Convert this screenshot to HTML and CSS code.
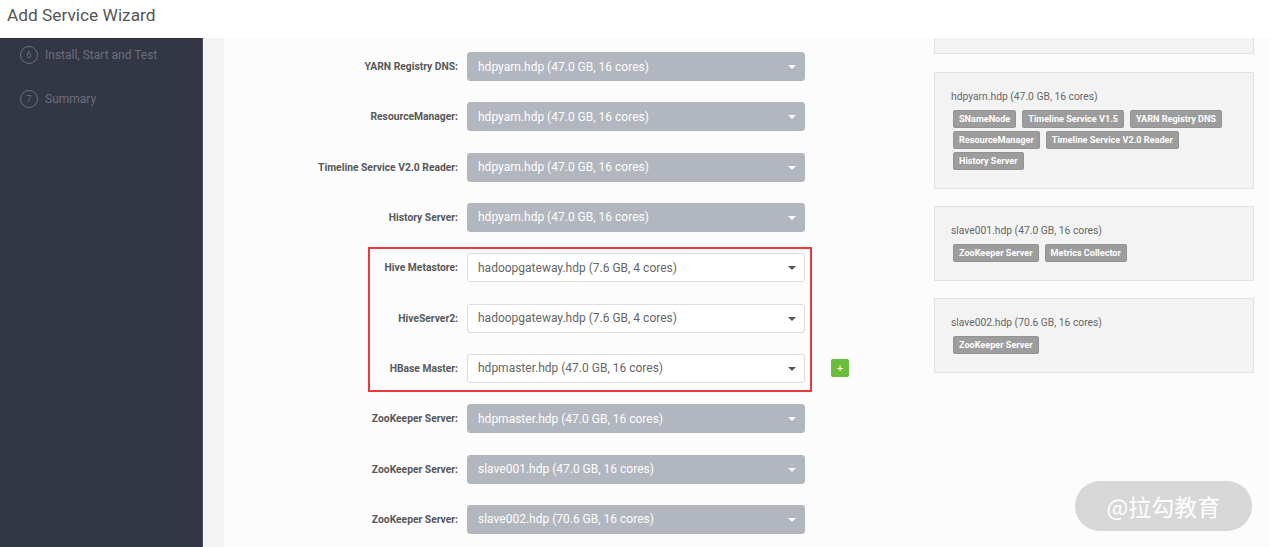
FILE: index.html
```html
<!DOCTYPE html>
<html>
<head>
<meta charset="utf-8">
<link rel="stylesheet" href="styles.css">
</head>
<body>
<header class="topbar"><h1 class="title">Add Service Wizard</h1></header>
<div class="layout">
  <nav class="sidebar">
    <div class="step"><span class="step-num">6</span><span class="step-name">Install, Start and Test</span></div>
    <div class="step"><span class="step-num">7</span><span class="step-name">Summary</span></div>
  </nav>
  <div class="strip"></div>
  <main class="main">
    <section class="form">
      <div class="row"><label class="lbl">YARN Registry DNS:</label><div class="sel disabled">hdpyarn.hdp (47.0 GB, 16 cores)<span class="caret"></span></div></div>
      <div class="row"><label class="lbl">ResourceManager:</label><div class="sel disabled">hdpyarn.hdp (47.0 GB, 16 cores)<span class="caret"></span></div></div>
      <div class="row"><label class="lbl">Timeline Service V2.0 Reader:</label><div class="sel disabled">hdpyarn.hdp (47.0 GB, 16 cores)<span class="caret"></span></div></div>
      <div class="row"><label class="lbl">History Server:</label><div class="sel disabled">hdpyarn.hdp (47.0 GB, 16 cores)<span class="caret"></span></div></div>
      <div class="highlight">
        <div class="row"><label class="lbl">Hive Metastore:</label><div class="sel">hadoopgateway.hdp (7.6 GB, 4 cores)<span class="caret"></span></div></div>
        <div class="row"><label class="lbl">HiveServer2:</label><div class="sel">hadoopgateway.hdp (7.6 GB, 4 cores)<span class="caret"></span></div></div>
        <div class="row"><label class="lbl">HBase Master:</label><div class="sel">hdpmaster.hdp (47.0 GB, 16 cores)<span class="caret"></span></div><button class="add">+</button></div>
      </div>
      <div class="row"><label class="lbl">ZooKeeper Server:</label><div class="sel disabled">hdpmaster.hdp (47.0 GB, 16 cores)<span class="caret"></span></div></div>
      <div class="row"><label class="lbl">ZooKeeper Server:</label><div class="sel disabled">slave001.hdp (47.0 GB, 16 cores)<span class="caret"></span></div></div>
      <div class="row"><label class="lbl">ZooKeeper Server:</label><div class="sel disabled">slave002.hdp (70.6 GB, 16 cores)<span class="caret"></span></div></div>
    </section>
    <aside class="hosts">
      <div class="panel panel-cut"></div>
      <div class="panel">
        <div class="host">hdpyarn.hdp (47.0 GB, 16 cores)</div>
        <div class="badges">
          <span class="badge">SNameNode</span><span class="badge">Timeline Service V1.5</span><span class="badge">YARN Registry DNS</span>
          <span class="badge">ResourceManager</span><span class="badge">Timeline Service V2.0 Reader</span>
          <span class="badge">History Server</span>
        </div>
      </div>
      <div class="panel">
        <div class="host">slave001.hdp (47.0 GB, 16 cores)</div>
        <div class="badges"><span class="badge">ZooKeeper Server</span><span class="badge">Metrics Collector</span></div>
      </div>
      <div class="panel">
        <div class="host">slave002.hdp (70.6 GB, 16 cores)</div>
        <div class="badges"><span class="badge">ZooKeeper Server</span></div>
      </div>
    </aside>
  </main>
</div>
<div class="watermark">@拉勾教育</div>
</body>
</html>
```
FILE: styles.css
```css
html, body {
  margin: 0;
  padding: 0;
}
body {
  width: 1270px;
  height: 547px;
  overflow: hidden;
  background: #ffffff;
  font-family: Roboto, "Noto Sans", sans-serif;
  position: relative;
}
.topbar {
  height: 38px;
  background: #ffffff;
}
.title {
  margin: 0;
  padding-left: 7px;
  font-size: 17.3px;
  font-weight: 400;
  line-height: 31px;
  color: #555555;
}
.layout {
  display: flex;
  height: 509px;
}
.sidebar {
  width: 202px;
  flex: none;
  background: #333645;
  border-right: 1px solid #4a4d5c;
  padding-top: 8px;
  box-sizing: content-box;
}
.step {
  display: flex;
  align-items: center;
  gap: 7px;
  padding-left: 20px;
  height: 18px;
  margin-bottom: 26px;
}
.step-num {
  width: 16px;
  height: 16px;
  border: 1px solid #6c6f7e;
  border-radius: 50%;
  color: #6c6f7e;
  font-size: 9.5px;
  line-height: 16px;
  text-align: center;
}
.step-name {
  color: #6c6f7e;
  font-size: 12px;
}
.strip {
  width: 21px;
  flex: none;
  background: #f3f3f3;
}
.main {
  flex: 1;
  display: flex;
  background: #fcfcfc;
  padding-left: 76px;
  overflow: hidden;
}
.form {
  width: 634px;
  flex: none;
  display: flex;
  flex-direction: column;
  gap: 21.33px;
  padding-top: 14px;
}
.highlight {
  position: relative;
  display: flex;
  flex-direction: column;
  gap: 21.33px;
}
.highlight::after {
  content: "";
  position: absolute;
  left: 68px;
  width: 444px;
  top: -6px;
  bottom: -9px;
  border: 2px solid #e8393c;
  box-sizing: border-box;
  pointer-events: none;
}
.row {
  display: flex;
  align-items: center;
  height: 29px;
}
.lbl {
  width: 167px;
  padding-right: 9px;
  box-sizing: border-box;
  text-align: right;
  font-size: 10.3px;
  font-weight: 700;
  color: #585858;
}
.sel {
  width: 338px;
  height: 29px;
  box-sizing: border-box;
  position: relative;
  display: flex;
  align-items: center;
  padding-left: 10px;
  border: 1px solid #dcdcdc;
  border-radius: 3px;
  background: #ffffff;
  color: #666666;
  font-size: 12px;
}
.sel.disabled {
  background: #b2b6be;
  border-color: #b2b6be;
  color: #ffffff;
}
.caret {
  position: absolute;
  right: 8px;
  top: 12px;
  width: 0;
  height: 0;
  border-left: 4px solid transparent;
  border-right: 4px solid transparent;
  border-top: 4px solid #555555;
}
.sel.disabled .caret {
  border-top-color: #ffffff;
}
.add {
  margin-left: 26px;
  width: 18px;
  height: 18px;
  padding: 0;
  border: none;
  border-radius: 2px;
  background: #6abd3b;
  color: #ffffff;
  font-family: "DejaVu Sans", sans-serif;
  font-size: 9px;
  font-weight: 700;
  line-height: 18px;
  text-align: center;
}
.hosts {
  width: 320px;
  flex: none;
  display: flex;
  flex-direction: column;
}
.panel {
  background: #f3f3f3;
  border: 1px solid #e2e2e2;
  padding: 17px 16px 18px 16px;
  margin-bottom: 17px;
}
.panel-cut {
  border-top: none;
  height: 15px;
  padding: 0;
  box-sizing: content-box;
  margin-bottom: 18px;
}
.host {
  font-size: 10.3px;
  line-height: 14px;
  color: #666666;
}
.badges {
  margin-top: 6px;
  padding-left: 2px;
  display: flex;
  flex-wrap: wrap;
  gap: 3px 6px;
}
.badge {
  display: inline-block;
  height: 18px;
  box-sizing: border-box;
  padding: 0 5px;
  border: 1px solid #939393;
  border-radius: 2px;
  background: #9d9d9d;
  color: #ffffff;
  font-size: 9.1px;
  font-weight: 700;
  line-height: 16px;
  white-space: nowrap;
}
.watermark {
  position: absolute;
  right: 18px;
  bottom: 16px;
  width: 177px;
  height: 50px;
  border-radius: 25px;
  background: rgba(205, 205, 205, 0.8);
  color: #ffffff;
  font-family: "Noto Sans CJK SC", sans-serif;
  font-size: 23px;
  line-height: 50px;
  text-align: center;
}
```
